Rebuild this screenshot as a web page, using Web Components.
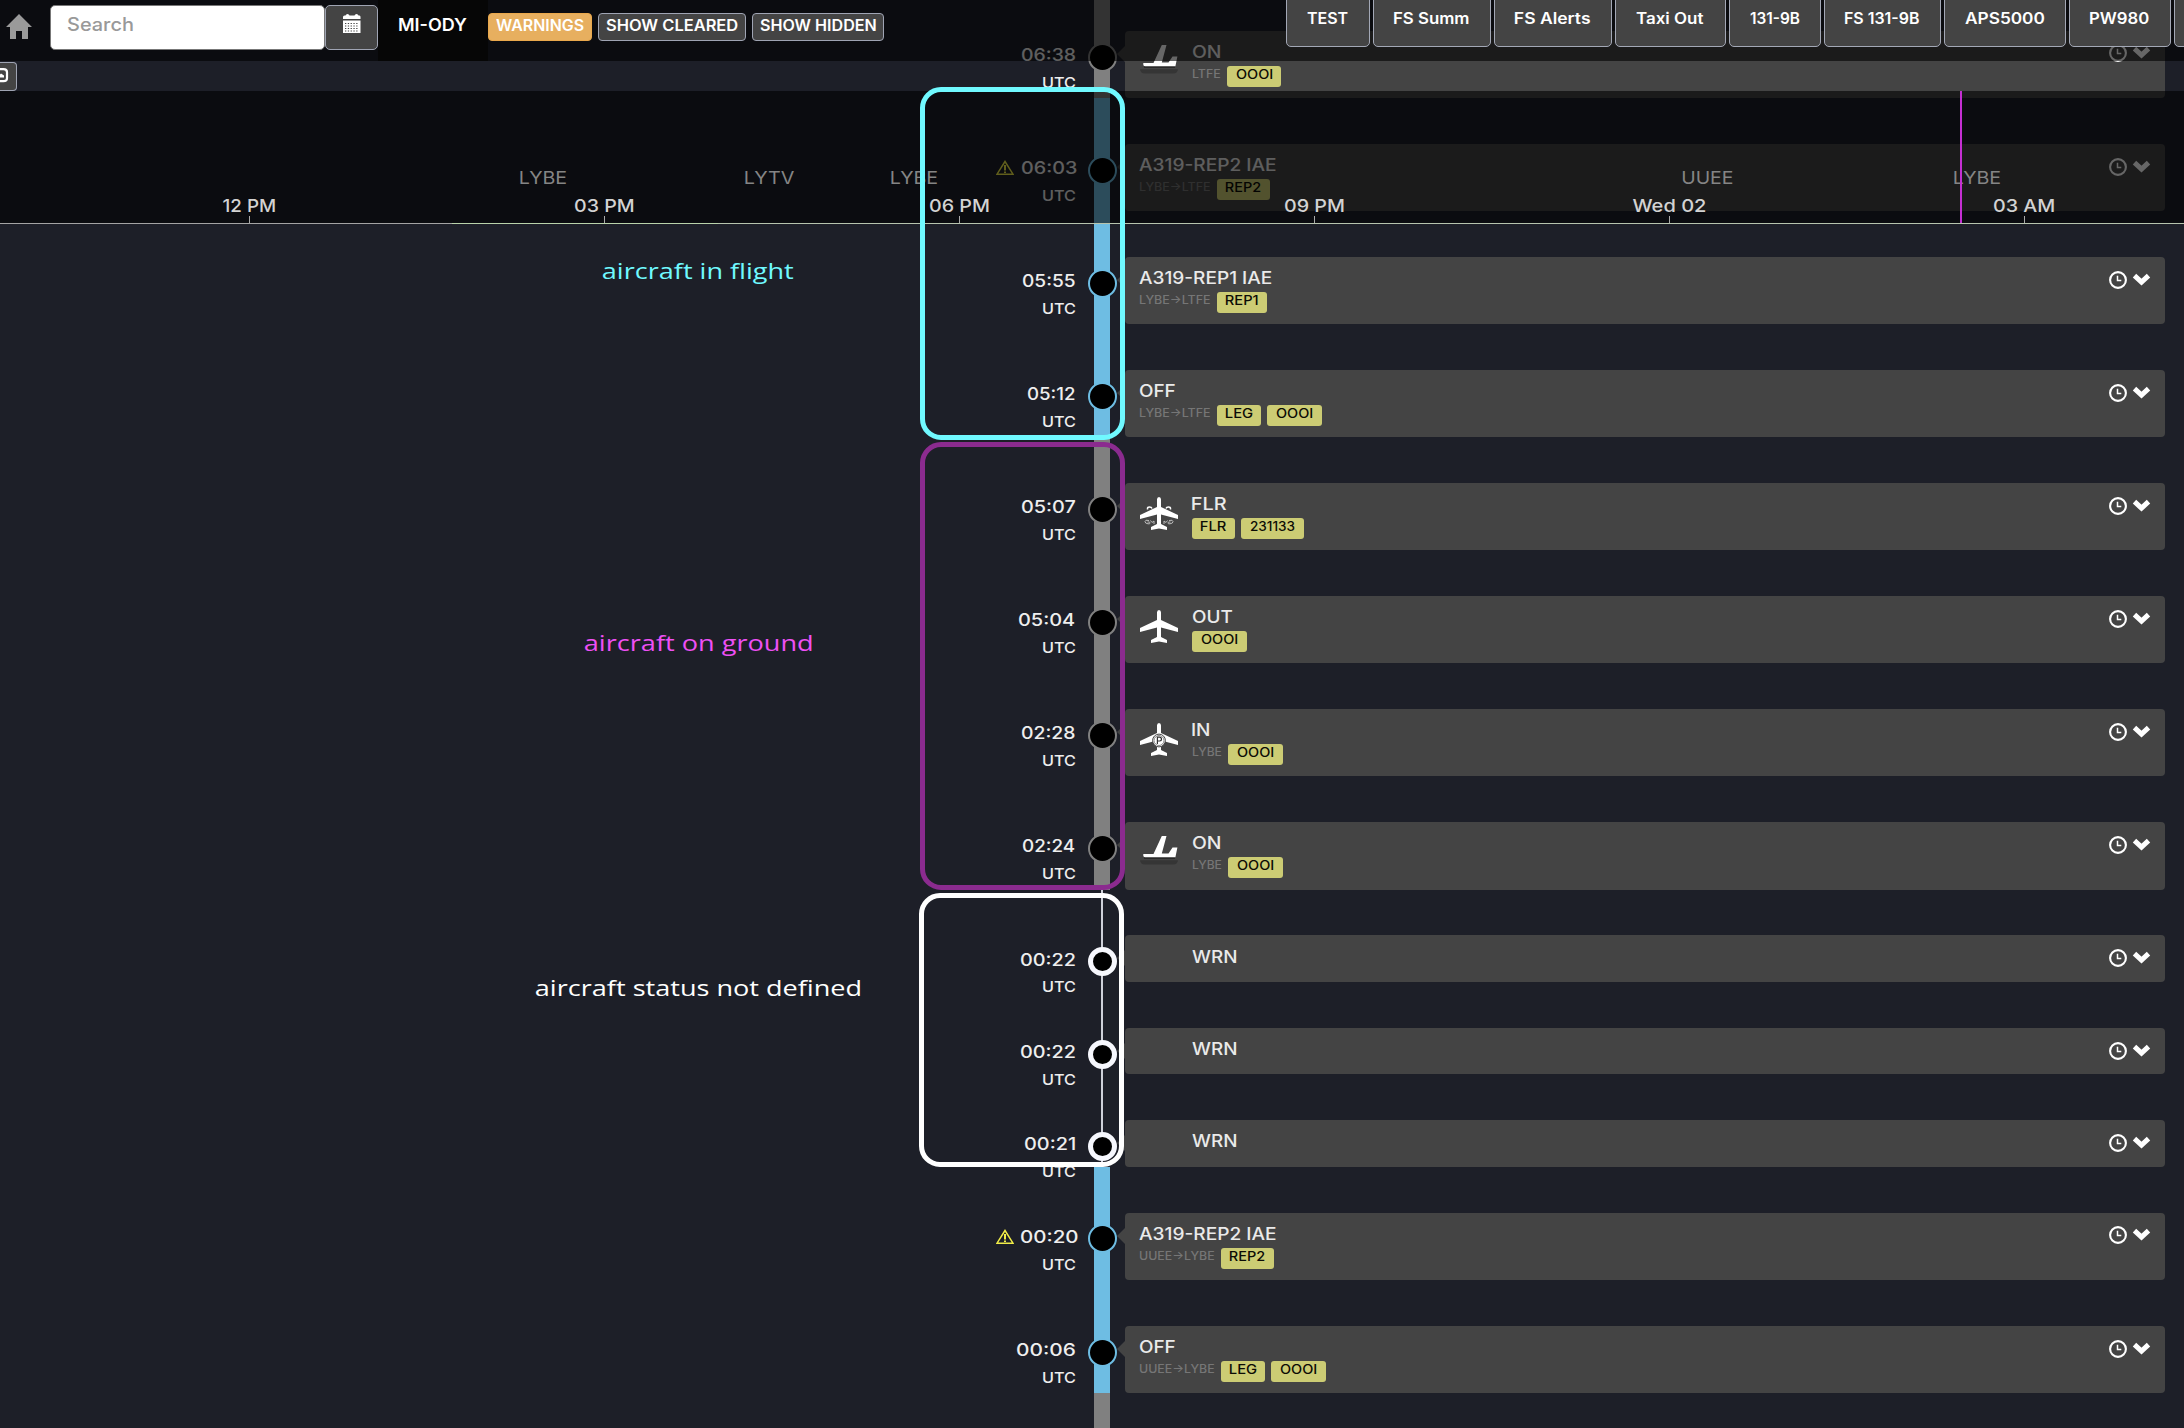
<!DOCTYPE html>
<html lang="en">
<head>
<meta charset="utf-8">
<title>MI-ODY</title>
<style>
html,body{margin:0;height:100%;background:#1d1f28;overflow:hidden}
body{font-family:Inter,"Noto Sans",sans-serif;font-weight:500;color:#eee}
</style>
</head>
<body>
<app-shell></app-shell>
<script>
const define=(name,css,html,after)=>{
  const t=document.createElement('template');
  t.innerHTML='<style>'+css+'</style>'+html;
  customElements.define(name,class extends HTMLElement{
    connectedCallback(){
      if(this.shadowRoot)return;
      this.attachShadow({mode:'open'}).append(t.content.cloneNode(true));
      if(after)after.call(this,this.shadowRoot);
    }
  });
};
const pen=document.createElement('canvas').getContext('2d');

/* Text whose ink is stretched to the width given in "w". */
define('fit-text',
 ':host{display:block;white-space:pre;flex:none}span{display:block;transform-origin:0 50%;width:max-content}',
 '<span><slot></slot></span>',
 function(r){
  const cs=getComputedStyle(this),w=+this.getAttribute('w');
  pen.font=cs.fontWeight+' '+cs.fontSize+' '+cs.fontFamily;
  const m=pen.measureText(this.textContent);
  const s=w/(m.actualBoundingBoxRight+m.actualBoundingBoxLeft);
  this.style.width=w+'px';
  r.querySelector('span').style.transform='translateX('+(m.actualBoundingBoxLeft*s)+'px) scaleX('+s+')';
 });

const PLANE='<path d="M17 2.5Q17 0 19 0T21 2.5V10L38 18V22L21 17.5V27L27 30V33L19 31.4L11 33V30L17 27V17.5L0 22V18L17 10Z" fill="#fff"/>';
const ICONS={
 out:PLANE,
 flr:'<g fill="none" stroke="#fff" stroke-width="1.500"><path d="M7.500 12.500V11.500Q7.500 10 9.500 10T12 11.500M30.500 12.500V11.500Q30.500 10 28.500 10T26 11.500"/></g><g fill="none" stroke="#bbb" stroke-width="1"><path d="M9 23.500Q5 22.500 5 24.500T8 26.800T9.500 25H7.500M10.500 23.500L12 25.500L14 24V27M29 23.500Q33 22.500 33 24.500T30 26.800T28.500 25H30.500M27.500 23.500L26 25.500L24 24V27"/></g>'+PLANE,
 in:PLANE+'<circle cx="19" cy="17.500" r="6.400" fill="#fff" stroke="#444" stroke-width="1"/><circle cx="19" cy="17.500" r="5" fill="none" stroke="#666" stroke-width=".8"/><path d="M17.400 21V14.200H19.600A1.900 1.900 0 0 1 19.600 18H17.400" fill="none" stroke="#333" stroke-width="1.200"/>',
 on:'<path d="M0 24.300H38Q37.500 28.500 33 28.500H5Q.5 28.500 0 24.300Z" fill="#353535"/><path d="M4 22H35" stroke="#222" stroke-width="1.500"/><path d="M21.800 0H26.500L21.800 17.600H28.500L32.500 11.500H37.400L35.400 21.200H5Q3 21.200 3.300 18H13.500Z" fill="#fff"/>'
};
define('flight-icon',':host{display:block;width:38px;height:33px}svg{display:block;overflow:visible}','<svg width="38" height="33"></svg>',
 function(r){r.querySelector('svg').innerHTML=ICONS[this.getAttribute('name')]||''});

define('event-tag',
 ':host{display:flex;box-sizing:border-box;height:21px;padding:0 9px;border-radius:3px;background:#cccc74;color:#0c0c06;font-size:12.8px;line-height:18px}',
 '<slot></slot>');

define('card-actions',':host{display:flex;gap:6px;align-items:center;height:18px}svg{display:block;overflow:visible}',
 '<svg width="18" height="18"><circle cx="9" cy="9" r="7.900" fill="none" stroke="#fff" stroke-width="2.100"/><path d="M8.500 4.700V9.500H12.300" fill="none" stroke="#fff" stroke-width="1.500"/></svg><svg width="17" height="12"><path d="M1.500 1.700L8.500 8.200L15.500 1.700" fill="none" stroke="#fff" stroke-width="5"/></svg>');

define('event-card',
 `:host{display:block;position:relative;box-sizing:border-box;width:1040px;height:100%;background:#444;border-radius:4px}
 :host::before{content:"";position:absolute;left:-8px;top:15px;border:8px solid transparent;border-left:0;border-right-color:#444}
 .in{display:flex;padding:13.7px 15.500px 0 14px}
 .ic{width:53px;flex:none;box-sizing:border-box;padding:.4px 0 0 1px}
 .tx{flex:1}
 .ti{display:flex;font-size:17px;line-height:15px;height:15px;padding-top:.500px;color:#eaeaea}
 .sub{display:flex;gap:6px;margin-top:5.800px;height:21px;font-size:11.500px;line-height:17px;color:#767676}
 card-actions{margin-top:.2px}`,
 '<div class="in"><div class="ic"><flight-icon></flight-icon></div><div class="tx"><div class="ti"><slot name="title"></slot></div><div class="sub"><slot></slot></div></div><card-actions></card-actions></div>',
 function(r){
  const n=this.getAttribute('icon');
  if(!n)r.querySelector('.ic').remove();
  else r.querySelector('.ic').innerHTML='<flight-icon name="'+n+'"></flight-icon>';
 });

define('timeline-row',
 `:host{display:flex;flex:none;height:113.1px;--rail:#808080}
 :host([phase=flight]){--rail:#6ebde3}
 :host([short]){height:92.400px}
 :host([end]){flex:1}
 .time{box-sizing:border-box;width:1094px;padding:60px 19px 0 0;display:flex;flex-direction:column;align-items:flex-end}
 .t{display:flex;align-items:center;gap:6.500px;font-size:17px;line-height:20px;height:20px}
 .u{font-size:14.800px;line-height:16px;margin:9.800px -.5px 0 0}
 svg{display:none}
 :host([warn]) svg{display:block}
 .rail{width:16px;background:var(--rail);position:relative}
 :host([phase=none]) .rail{background:linear-gradient(90deg,transparent 7px,#cfd1da 7px,#cfd1da 9px,transparent 9px)}
 .dot{position:absolute;box-sizing:border-box;left:-6px;top:57.700px;width:29px;height:29px;border-radius:50%;background:#000;border:2px solid var(--rail)}
 :host([phase=none]) .dot{border:5px solid #f6f7fd}
 .card{padding:45.800px 0 0 15px;box-sizing:border-box}
 :host([end]) .time{padding:0}
 :host([end]) .card,:host([end]) .time>*,:host([end]) .dot{display:none}`,
 `<div class="time"><div class="t"><svg width="18" height="16"><path d="M9 1.500L17 14.200H1Z" fill="none" stroke="#f0ec48" stroke-width="1.500"/><path d="M9 5V10.500M9 11.500V13" stroke="#f0ec48" stroke-width="2"/></svg><slot name="time"></slot></div><div class="u"><fit-text w="33">UTC</fit-text></div></div><div class="rail"><div class="dot"></div></div><div class="card"><slot></slot></div>`,
 function(r){const s=this.getAttribute('shift');if(s)r.querySelector('.t').style.marginRight='-'+s+'px'});

define('event-timeline',':host{display:flex;flex-direction:column;height:1443.200px;margin-top:-15.200px}','<slot></slot>');

define('tool-button',
 ':host{display:flex;box-sizing:border-box;height:28px;padding:0 7px;border:1px solid #9fa4b3;border-radius:4px;background:#444;color:#fff;font-size:15.500px;font-weight:600;line-height:24px}:host([active]){background:#e7af5f;border-color:#e9a84c}',
 '<slot></slot>');

define('top-bar',
 `:host{display:flex;height:61px;background:rgba(0,0,0,.6);align-items:flex-start}
 .home{margin:14px 0 0 6px;display:block}
 .search{box-sizing:border-box;margin:5px 0 0 18px;width:275px;height:45px;border:1px solid #777;border-radius:5px;background:#fff;padding:0 0 0 16px;color:#999;font-size:18px;font-weight:500;line-height:38px}
 .cal{box-sizing:border-box;width:53px;height:45px;margin-top:5px;border:1px solid #9fa4b3;border-radius:5px;background:#444;display:flex;justify-content:center;padding-top:8px}
 .tail{box-sizing:border-box;width:110px;height:61px;background:#060606;padding:14.800px 0 0 20.500px;font-size:17.500px;line-height:20px;color:#fff;font-weight:600}
 .btns{display:flex;gap:6px;margin-top:13px}`,
 `<svg class="home" width="26" height="26"><path d="M13 0L26 13H22V25H16V17H10V25H4V13H0Z" fill="#9a9a9a"/></svg>
 <div class="search"><fit-text w="66">Search</fit-text></div>
 <div class="cal"><svg width="18" height="20"><path d="M0 3Q0 1.500 1.500 1.500H2.500Q3 0 4.500 0T6.500 1.500H11.500Q12 0 13.500 0T15.500 1.500H16.500Q17.500 1.500 17.500 3V5H0ZM0 6.500H17.500V19H0Z" fill="#fff"/><path d="M2 9.500H16M2 12H16M2 14.500H16M2 17H16" stroke="#444" stroke-width="1.200" stroke-dasharray="1.300 1.500"/></svg></div>
 <div class="tail"><fit-text w="68.500">MI-ODY</fit-text></div>
 <div class="btns"><tool-button active><fit-text w="88">WARNINGS</fit-text></tool-button><tool-button><fit-text w="132">SHOW CLEARED</fit-text></tool-button><tool-button><fit-text w="116">SHOW HIDDEN</fit-text></tool-button></div>`);

define('report-tab',
 ':host{display:flex;flex:none;box-sizing:border-box;justify-content:center;height:52px;border:1px solid #a3a8b6;border-radius:5px;background:#444;color:#fff;font-size:15.400px;line-height:20px;padding:12.900px 1px 0 0;font-weight:600}',
 '<slot></slot>',function(){this.style.width=this.getAttribute('width')+'px'});

define('report-tabs',':host{display:flex;gap:3px;height:47px;margin-top:-5px;width:898px;overflow:visible}','<slot></slot>');

const axis=[['12 PM',223.5,51.7,249],['03 PM',575,58.7,604],['06 PM',930,59,959],['09 PM',1285,59,1314],['Wed 02',1633.500,72,1669],['03 AM',1994,60.300,2024]];
const ports=[['LYBE',520,46.500],['LYTV',745,48.700],['LYBE',891,46.500],['UUEE',1682.500,50.300],['LYBE',1954,46.500]];
define('flight-axis',
 ':host{display:block;height:133px;background:rgba(0,0,0,.6)}svg{display:block;font-family:Inter,"Noto Sans",sans-serif;font-size:17.300px;font-weight:500}',
 '<svg width="2184" height="133"><g fill="#858585" font-weight="400">'+
 ports.map(p=>`<text x="${p[1]-1.3}" y="92.700" textLength="${p[2]+2}" lengthAdjust="spacingAndGlyphs">${p[0]}</text>`).join('')+
 '</g><g fill="#d3d3d3">'+
 axis.map(a=>`<text x="${a[1]-1}" y="121" textLength="${a[2]+2}" lengthAdjust="spacingAndGlyphs">${a[0]}</text><rect x="${a[3]}" y="125" width="1" height="8" fill="#aaa"/>`).join('')+
 '</g><rect y="132" width="452" height="1" fill="#a4a4a4"/><rect x="452" y="132" width="266" height="1" fill="#b9d3aa"/><rect x="718" y="132" width="1466" height="1" fill="#b7c4ae"/><rect x="1960" width="2" height="132" fill="#c52fd3"/></svg>');

define('side-button',
 ':host{display:block;height:30px;padding-top:1px;box-sizing:border-box}.b{box-sizing:border-box;width:17px;height:29px;background:#444;border:1px solid #9fa4b3;border-left:0;border-radius:0 4px 4px 0}svg{display:block}',
 '<div class="b"><svg width="16" height="26"><path d="M-8 6.200H3.500Q7 6.200 7 9.200V15.200Q7 18.200 3.500 18.200H-8" fill="none" stroke="#fff" stroke-width="2.200"/><path d="M-3 14.500L1 10.500L4 12.500V14.500Z" fill="#fff"/></svg></div>');

define('phase-frame',
 ':host{display:block;box-sizing:border-box;border:5px solid currentColor;border-radius:21px;width:205px}','',
 function(){this.style.height=this.getAttribute('h')+'px'});

define('phase-note',':host{display:block;font-family:"Open Sans",Inter,sans-serif;font-weight:400;font-size:22.500px;line-height:30px}','<slot></slot>');

const T=(w,s)=>`<fit-text w="${w}">${s}</fit-text>`;
const TAGS={REP1:32.3,REP2:35.3,LEG:26.5,OOOI:36.7,FLR:25,'231133':45};
const rows=[
 ['ground','06:38',54.3,'on','ON',28.5,['LTFE',28.700],['OOOI']],
 ['flight','06:03',55.5,'','A319-REP2 IAE',137.300,['LYBE→LTFE',71.700],['REP2'],1],
 ['flight','05:55',53,'','A319-REP1 IAE',133,['LYBE→LTFE',71.700],['REP1']],
 ['flight','05:12',48,'','OFF',36.700,['LYBE→LTFE',71.700],['LEG','OOOI']],
 ['ground','05:07',54,'flr','FLR',34.700,null,['FLR','231133']],
 ['ground','05:04',57,'out','OUT',40.700,null,['OOOI']],
 ['ground','02:28',53.700,'in','IN',17.500,['LYBE',30],['OOOI']],
 ['ground','02:24',53,'on','ON',28.500,['LYBE',30],['OOOI']],
 ['none','00:22',55.500,'none','WRN',44.500,null,[]],
 ['none','00:22',55.500,'none','WRN',44.500,null,[]],
 ['none','00:21',51,'none','WRN',44.500,null,[]],
 ['flight','00:20',58.600,'','A319-REP2 IAE',137.300,['UUEE→LYBE',75.700],['REP2'],4],
 ['flight','00:06',59,'','OFF',36.700,['UUEE→LYBE',75.700],['LEG','OOOI']]
];
const rowHtml=r=>`<timeline-row phase="${r[0]}"${r[0]==='none'?' short':''}${r[8]?` warn shift="${r[8]}"`:''}><fit-text slot="time" w="${r[2]}">${r[1]}</fit-text><event-card icon="${r[3]}"><fit-text slot="title" w="${r[5]}">${r[4]}</fit-text>${r[6]?T(r[6][1],r[6][0]):''}${r[7].map(t=>`<event-tag>${T(TAGS[t],t)}</event-tag>`).join('')}</event-card></timeline-row>`;
const tabs=[['TEST',84,41],['FS Summ',118,74.500],['FS Alerts',118,75],['Taxi Out',111,68],['131-9B',92,49.700],['FS 131-9B',117,74.300],['APS5000',122,79.700],['PW980',102,59]];

define('app-shell',
 `:host{display:block;position:relative;width:2184px;height:1428px;overflow:hidden;background:#1d1f28}
 .content{display:flow-root;height:1428px}
 .head{position:absolute;left:0;top:0;width:2184px}
 .tabs{position:absolute;right:0;top:0;width:898px;overflow:hidden;height:47px}
 .mark{position:absolute}`,
 `<div class="content"><event-timeline>${rows.map(rowHtml).join('')}<timeline-row end></timeline-row></event-timeline></div>
 <div class="head"><top-bar></top-bar><side-button></side-button><flight-axis></flight-axis></div>
 <div class="tabs"><report-tabs>${tabs.map(t=>`<report-tab width="${t[1]}">${T(t[2],t[0])}</report-tab>`).join('')}<report-tab width="90"></report-tab></report-tabs></div>
 <phase-frame class="mark" h="353" style="left:920px;top:87px;color:#70f9ff"></phase-frame>
 <phase-frame class="mark" h="448" style="left:920px;top:442px;color:#8b2b8f"></phase-frame>
 <phase-frame class="mark" h="274" style="left:919px;top:893px;color:#fff"></phase-frame>
 <phase-note class="mark" style="left:603px;top:256px;color:#70f9ff">${T(190.700,'aircraft in flight')}</phase-note>
 <phase-note class="mark" style="left:585px;top:628px;color:#ee50f5">${T(226.500,'aircraft on ground')}</phase-note>
 <phase-note class="mark" style="left:536px;top:973px;color:#fff">${T(324,'aircraft status not defined')}</phase-note>`);
</script>
</body>
</html>
